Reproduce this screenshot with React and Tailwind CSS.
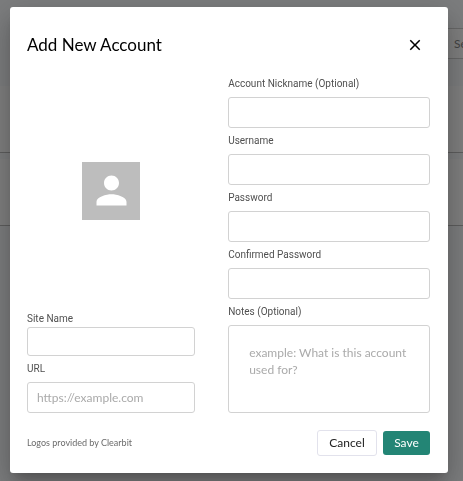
import React, { useState } from "react";

const LABEL = "font-[Roboto,sans-serif] text-[10px] leading-4 text-[#505050]";
const INPUT =
  "w-full rounded-[3px] border border-[#d2d2d2] bg-white px-[9px] font-[Lato,sans-serif] text-[12px] text-[#333] outline-none placeholder:text-[#aaa] placeholder:opacity-100";

const ACCOUNT_FIELDS = [
  { id: "nickname", label: "Account Nickname (Optional)", type: "text" },
  { id: "username", label: "Username", type: "text" },
  { id: "password", label: "Password", type: "password" },
  { id: "confirm", label: "Confirmed Password", type: "password" },
];

function PageBehind() {
  return (
    <div className="flex min-h-screen flex-col bg-[#f9fafc]">
      <header className="flex h-[86px] justify-end pt-7">
        <input
          type="text"
          aria-label="Search"
          placeholder="Search"
          className="h-[31px] w-7 border-y border-[#cfcfcf] bg-white pl-[19px] text-[12px] placeholder:text-[#888]"
        />
      </header>
      <div className="h-[67px] border-b border-[#bbb] bg-white" />
      <div className="mt-[6px] h-[67px] border-b border-[#bbb] bg-white" />
    </div>
  );
}

function Avatar() {
  return (
    <div className="flex size-[58px] items-center justify-center bg-[#bdbdbd]">
      <svg viewBox="0 0 24 24" className="size-[45px] fill-white" aria-hidden="true">
        <path d="M12 12c2.21 0 4-1.79 4-4s-1.79-4-4-4-4 1.79-4 4 1.79 4 4 4zm0 2c-2.67 0-8 1.34-8 4v2h16v-2c0-2.66-5.33-4-8-4z" />
      </svg>
    </div>
  );
}

export default function App() {
  const [form, setForm] = useState({});
  const update = (e) => setForm({ ...form, [e.target.id]: e.target.value });

  return (
    <div className="font-[Lato,sans-serif]">
      <PageBehind />

      <div className="fixed inset-0 overflow-hidden bg-black/50 pt-[7px] pr-[15px] pl-[10px]">
        <form
          role="dialog"
          aria-labelledby="dialog-title"
          onSubmit={(e) => e.preventDefault()}
          className="rounded-[3px] bg-white pt-[25px] pr-[18px] pb-[17px] pl-[17px] shadow-[0_8px_11px_-5px_rgba(0,0,0,0.2),0_17px_27px_2px_rgba(0,0,0,0.14),0_6px_33px_6px_rgba(0,0,0,0.12)]"
        >
          <div className="flex h-[26px] items-center justify-between">
            <h2 id="dialog-title" className="text-[17px] leading-6 text-black">
              Add New Account
            </h2>
            <button type="button" aria-label="Close" className="mr-[6px] flex size-[18px] items-center justify-center">
              <svg viewBox="0 0 24 24" className="size-[18px] fill-black" aria-hidden="true">
                <path d="M19 6.41 17.59 5 12 10.59 6.41 5 5 6.41 10.59 12 5 17.59 6.41 19 12 13.41 17.59 19 19 17.59 13.41 12z" />
              </svg>
            </button>
          </div>

          <div className="mt-[18px] grid grid-cols-[5fr_6fr] gap-[33px]">
            <div className="flex flex-col">
              <div className="flex flex-1 items-center justify-center pb-[6px]">
                <Avatar />
              </div>
              <label htmlFor="site" className={LABEL}>
                Site Name
              </label>
              <input id="site" type="text" onChange={update} className={`${INPUT} h-[29px]`} />
              <label htmlFor="url" className={`${LABEL} mt-[5px] mb-[5px]`}>
                URL
              </label>
              <input
                id="url"
                type="url"
                placeholder="https://example.com"
                onChange={update}
                className={`${INPUT} h-[31px]`}
              />
            </div>

            <div className="flex flex-col gap-[5px]">
              {ACCOUNT_FIELDS.map((field) => (
                <div key={field.id} className="flex flex-col gap-[5px]">
                  <label htmlFor={field.id} className={LABEL}>
                    {field.label}
                  </label>
                  <input id={field.id} type={field.type} onChange={update} className={`${INPUT} h-[31px]`} />
                </div>
              ))}
              <label htmlFor="notes" className={LABEL}>
                Notes (Optional)
              </label>
              <textarea
                id="notes"
                placeholder="example: What is this account used for?"
                onChange={update}
                className="h-[88px] w-full resize-none rounded-[3px] border border-[#d2d2d2] bg-white px-5 py-[18px] text-[12px] leading-[17px] outline-none placeholder:text-[#aaa] placeholder:opacity-100"
              />
            </div>
          </div>

          <div className="mt-[17px] flex items-center justify-between">
            <p className="text-[9px] leading-4 text-[#6b6b6b]">Logos provided by Clearbit</p>
            <div className="flex items-center gap-[6px]">
              <button
                type="button"
                className="h-[26px] w-[60px] rounded-[3px] border border-[#e2e2ec] bg-white text-[12px] text-[#212121]"
              >
                Cancel
              </button>
              <button type="submit" className="h-6 w-[47px] rounded-[3px] bg-[#238575] text-[12px] text-white">
                Save
              </button>
            </div>
          </div>
        </form>
      </div>
    </div>
  );
}
